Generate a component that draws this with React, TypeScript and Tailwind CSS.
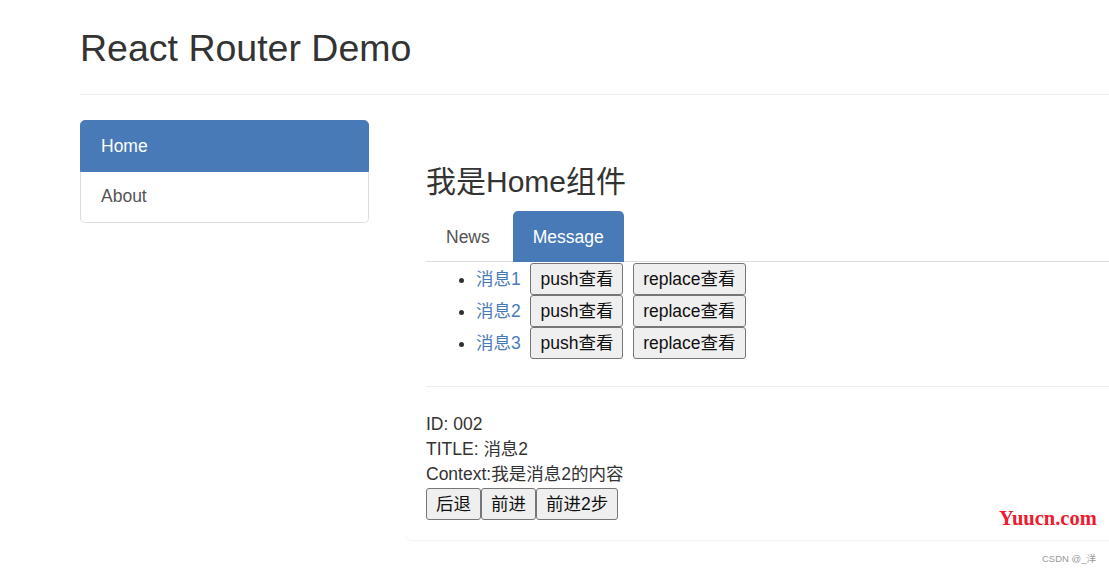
import React, { useState } from "react";

const messages = [
  { id: "001", title: "消息1" },
  { id: "002", title: "消息2" },
  { id: "003", title: "消息3" },
];

const btn =
  "inline-block align-top h-[32px] leading-[30px] px-[9px] border border-[#767676] rounded-[3px] bg-[#efefef] text-[17.5px] text-[#111]";

export default function App() {
  const [active] = useState("002");
  const detail = messages.find((m) => m.id === active)!;

  return (
    <div className="relative w-[1109px] h-[573px] overflow-hidden bg-white text-[#333] text-[17.5px] leading-[25px] font-['Liberation_Sans','Noto_Sans_CJK_SC',sans-serif]">
      <div className="ml-[80px] w-[1100px] pt-[28px] pb-[25px] border-b border-[#eee]">
        <h2 className="text-[37.5px] leading-[41px] font-normal">React Router Demo</h2>
      </div>

      <div className="flex items-start ml-[80px] mt-[25px] gap-[37px]">
        {/* left nav */}
        <div className="w-[289px] shrink-0 flex flex-col">
          <a className="block h-[52px] px-[20px] py-[13px] rounded-t-[5px] bg-[#487ab8] border border-[#487ab8] text-white">
            Home
          </a>
          <a className="block h-[51px] px-[20px] py-[12px] rounded-b-[5px] border border-[#ddd] border-t-0 text-[#555]">
            About
          </a>
        </div>

        {/* panel */}
        <div className="w-[760px] shrink-0 rounded-[5px] bg-white shadow-[0_1px_1.5px_rgba(0,0,0,0.06)] border border-transparent px-[19px] pt-[19px] pb-[19px]">
          <h3 className="mt-[25px] mb-[13px] text-[30px] leading-[33px] font-normal">我是Home组件</h3>

          <ul className="flex border-b border-[#ddd] h-[51px]">
            <li className="mr-[3px]">
              <a className="block h-[51px] px-[20px] py-[14px] text-[#555]">News</a>
            </li>
            <li>
              <a className="block h-[51px] px-[20px] py-[14px] rounded-t-[5px] bg-[#487ab8] text-white">Message</a>
            </li>
          </ul>

          <ul className="list-disc pl-[50px] pt-[1px]">
            {messages.map((m) => (
              <li key={m.id} className="h-[32px] leading-[32px]">
                <a className="text-[#4a7ab8]">{m.title}</a>
                &nbsp;&nbsp;
                <button className={btn}>push查看</button>
                &nbsp;&nbsp;
                <button className={btn}>replace查看</button>
              </li>
            ))}
          </ul>

          <hr className="mt-[27px] mb-[25px] border-t border-[#eee]" />

          <div>
            <div>ID: {detail.id}</div>
            <div>TITLE: {detail.title}</div>
            <div>Context:我是{detail.title}的内容</div>
            <div className="h-[33px] pt-[1px]">
              <button className={btn}>后退</button>
              <button className={btn}>前进</button>
              <button className={btn}>前进2步</button>
            </div>
          </div>
        </div>
      </div>

      <div className="absolute left-[999px] top-[506px] text-[20.5px] leading-[24px] font-bold text-[#ee1b2e] font-['Liberation_Serif',serif]">
        Yuucn.com
      </div>
      <div className="absolute left-[1042px] top-[553px] text-[9.5px] leading-[12px] text-[#999]">CSDN @_洋</div>
    </div>
  );
}
